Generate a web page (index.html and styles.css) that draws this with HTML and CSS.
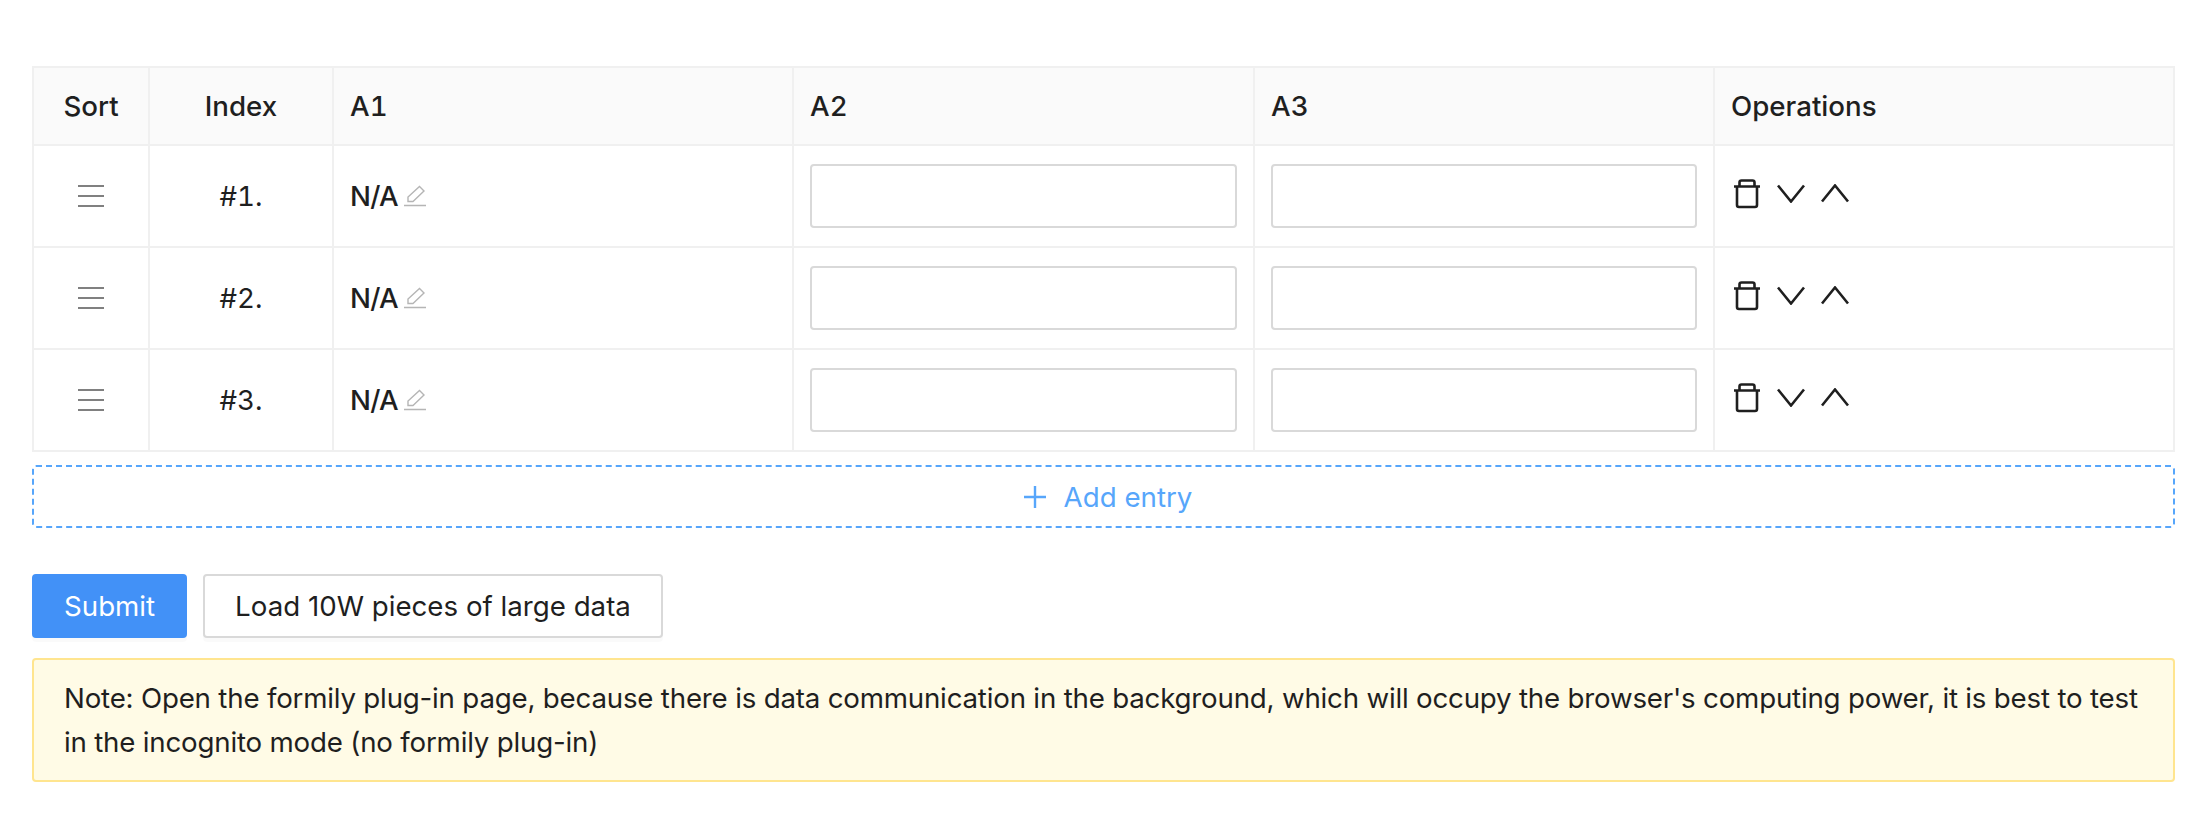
FILE: index.html
```html
<!DOCTYPE html>
<html lang="en">
<head>
    <meta charset="UTF-8">
    <title>Array Table</title>
    <link rel="stylesheet" href="styles.css">
</head>
<body>
    <svg class="icon-defs" width="0" height="0" aria-hidden="true">
        <symbol id="icon-drag" viewBox="0 0 26 22"><path d="M0 1h26M0 11h26M0 21h26" fill="none" stroke="currentColor" stroke-width="2"/></symbol>
        <symbol id="icon-edit" viewBox="0 0 24 22"><path d="M1 20.500h22M5 16.500V12L16.500 1.500l4.500 4.500L10 16.500z" fill="none" stroke="currentColor" stroke-width="1.400"/></symbol>
        <symbol id="icon-trash" viewBox="0 0 28 30"><path d="M1 7.500h26M4 8v18q0 2 2 2h16q2 0 2-2V8M6.500 7V3.500q0-2 2-2h11q2 0 2 2V7" fill="none" stroke="currentColor" stroke-width="2.600"/></symbol>
        <symbol id="icon-down" viewBox="0 0 28 19"><path d="M1 1.500l13 16 13-16" fill="none" stroke="currentColor" stroke-width="2.600"/></symbol>
        <symbol id="icon-up" viewBox="0 0 28 19"><path d="M1 17.500l13-16 13 16" fill="none" stroke="currentColor" stroke-width="2.600"/></symbol>
        <symbol id="icon-plus" viewBox="0 0 24 24"><path d="M12 1v22M1 12h22" fill="none" stroke="currentColor" stroke-width="2.400"/></symbol>
    </svg>

    <table class="array-table">
        <thead>
            <tr>
                <th class="col-sort center">Sort</th>
                <th class="col-index center">Index</th>
                <th class="col-a">A1</th>
                <th class="col-b">A2</th>
                <th class="col-a">A3</th>
                <th>Operations</th>
            </tr>
        </thead>
        <tbody>
            <tr>
                <td class="center"><svg class="drag"><use href="#icon-drag"/></svg></td>
                <td class="center">#1.</td>
                <td><span class="na">N/A</span><svg class="edit"><use href="#icon-edit"/></svg></td>
                <td><input class="text-input" type="text"></td>
                <td><input class="text-input" type="text"></td>
                <td>
                    <div class="ops">
                        <svg class="trash"><use href="#icon-trash"/></svg>
                        <svg class="arrow"><use href="#icon-down"/></svg>
                        <svg class="arrow"><use href="#icon-up"/></svg>
                    </div>
                </td>
            </tr>
            <tr>
                <td class="center"><svg class="drag"><use href="#icon-drag"/></svg></td>
                <td class="center">#2.</td>
                <td><span class="na">N/A</span><svg class="edit"><use href="#icon-edit"/></svg></td>
                <td><input class="text-input" type="text"></td>
                <td><input class="text-input" type="text"></td>
                <td>
                    <div class="ops">
                        <svg class="trash"><use href="#icon-trash"/></svg>
                        <svg class="arrow"><use href="#icon-down"/></svg>
                        <svg class="arrow"><use href="#icon-up"/></svg>
                    </div>
                </td>
            </tr>
            <tr>
                <td class="center"><svg class="drag"><use href="#icon-drag"/></svg></td>
                <td class="center">#3.</td>
                <td><span class="na">N/A</span><svg class="edit"><use href="#icon-edit"/></svg></td>
                <td><input class="text-input" type="text"></td>
                <td><input class="text-input" type="text"></td>
                <td>
                    <div class="ops">
                        <svg class="trash"><use href="#icon-trash"/></svg>
                        <svg class="arrow"><use href="#icon-down"/></svg>
                        <svg class="arrow"><use href="#icon-up"/></svg>
                    </div>
                </td>
            </tr>
        </tbody>
    </table>

    <button class="add-entry" type="button"><svg class="plus"><use href="#icon-plus"/></svg>Add entry</button>

    <div class="actions">
        <button class="btn btn-primary" type="button">Submit</button>
        <button class="btn" type="button">Load 10W pieces of large data</button>
    </div>

    <div class="note">Note: Open the formily plug-in page, because there is data communication in the background, which will occupy the browser's computing power, it is best to test in the incognito mode (no formily plug-in)</div>
</body>
</html>
```

FILE: styles.css
```css
body {
    margin: 0;
    padding: 66px 31px 0 32px;
    background-color: #fff;
    color: #1f1f1f;
    font-family: Inter, "Noto Sans", sans-serif;
    font-size: 27.7px;
    line-height: 44px;
}
.icon-defs {
    position: absolute;
}
.array-table {
    width: 100%;
    table-layout: fixed;
    border-collapse: collapse;
    border: 2px solid #f0f0f0;
    font-variant-numeric: tabular-nums;
}
.array-table th,
.array-table td {
    box-sizing: border-box;
    border: 2px solid #f0f0f0;
    padding: 0 16px;
    text-align: left;
    font-weight: 400;
}
.array-table th {
    height: 78px;
    background-color: #fafafa;
    font-weight: 500;
}
.array-table td {
    height: 102px;
}
.array-table .center {
    text-align: center;
}
.col-sort { width: 116px; }
.col-index { width: 184px; }
.col-a { width: 460px; }
.col-b { width: 461px; }
.drag {
    display: block;
    width: 26px;
    height: 22px;
    margin: 0 auto;
    color: #808080;
}
.na {
    font-weight: 500;
    letter-spacing: -0.8px;
}
.edit {
    width: 24px;
    height: 22px;
    margin-left: 5px;
    color: #b5b5b5;
    vertical-align: -1px;
}
.text-input {
    display: block;
    box-sizing: border-box;
    width: 100%;
    height: 64px;
    border: 2px solid #d9d9d9;
    border-radius: 4px;
    background-color: #fff;
}
.ops {
    display: flex;
    align-items: center;
    gap: 16px;
    margin: -5px 0 0 2px;
}
.trash {
    width: 28px;
    height: 30px;
}
.arrow {
    width: 28px;
    height: 19px;
}
.add-entry {
    display: flex;
    align-items: center;
    justify-content: center;
    box-sizing: border-box;
    width: 100%;
    height: 63px;
    margin-top: 13px;
    padding: 0 0 0 8px;
    border: 2px dashed #57a6fb;
    border-radius: 4px;
    background-color: #fff;
    color: #57a6fb;
    font: inherit;
}
.plus {
    width: 24px;
    height: 24px;
    margin-right: 17px;
}
.actions {
    display: flex;
    gap: 16px;
    margin-top: 46px;
}
.btn {
    box-sizing: border-box;
    height: 64px;
    padding: 0 30px;
    border: 2px solid #d9d9d9;
    border-radius: 4px;
    background-color: #fff;
    box-shadow: 0 4px 0 rgba(0, 0, 0, 0.02);
    color: #1f1f1f;
    font: inherit;
}
.btn-primary {
    border-color: #4291f7;
    background-color: #4291f7;
    color: #fff;
}
.note {
    box-sizing: border-box;
    height: 124px;
    margin-top: 20px;
    padding: 16px 30px;
    border: 2px solid #ffe58f;
    border-radius: 4px;
    background-color: #fffbe6;
    letter-spacing: -0.2px;
}
```
